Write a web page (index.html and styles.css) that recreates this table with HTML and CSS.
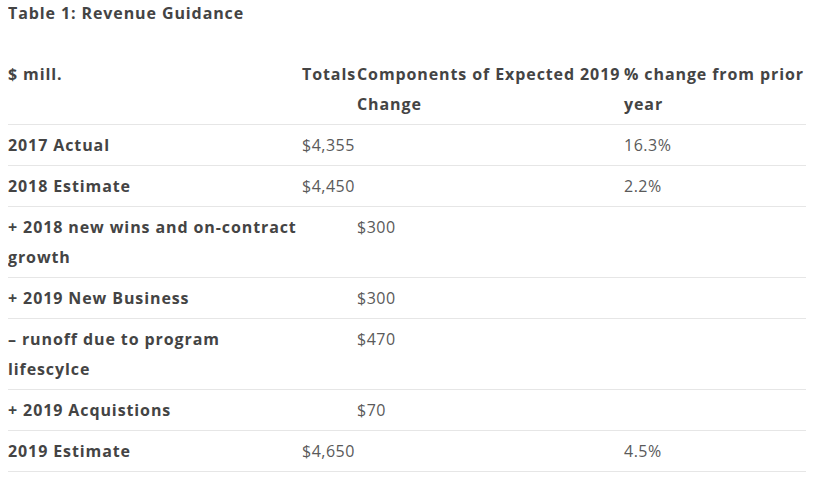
FILE: index.html
```html
<!DOCTYPE html>
<html>
<head>
<meta charset="utf-8">
<link rel="stylesheet" href="styles.css">
</head>
<body>
<p class="title">Table 1: Revenue Guidance</p>
<table class="guidance">
  <colgroup>
    <col class="c1"><col class="c2"><col class="c3"><col class="c4">
  </colgroup>
  <thead>
    <tr><th>$ mill.</th><th>Totals</th><th>Components of Expected 2019 Change</th><th>% change from prior year</th></tr>
  </thead>
  <tbody>
    <tr><th>2017 Actual</th><td>$4,355</td><td></td><td>16.3%</td></tr>
    <tr><th>2018 Estimate</th><td>$4,450</td><td></td><td>2.2%</td></tr>
    <tr><th>+ 2018 new wins and on-contract growth</th><td></td><td>$300</td><td></td></tr>
    <tr><th>+ 2019 New Business</th><td></td><td>$300</td><td></td></tr>
    <tr><th>– runoff due to program lifescylce</th><td></td><td>$470</td><td></td></tr>
    <tr><th>+ 2019 Acquistions</th><td></td><td>$70</td><td></td></tr>
    <tr><th>2019 Estimate</th><td>$4,650</td><td></td><td>4.5%</td></tr>
  </tbody>
</table>
</body>
</html>
```
FILE: styles.css
```css
html, body {
  background: #fff;
}
body {
  margin: 0 8px;
  font-family: "Open Sans", "Liberation Sans", sans-serif;
  font-size: 16px;
  color: #444;
}
.title {
  margin: 0 0 28px;
  line-height: 26px;
  font-weight: 700;
  letter-spacing: 0.9px;
  color: #444;
}
.guidance {
  width: 798px;
  border-collapse: collapse;
  table-layout: fixed;
}
.c1 { width: 294px; }
.c2 { width: 55px; }
.c3 { width: 267px; }
.c4 { width: 182px; }
.guidance th,
.guidance td {
  padding: 5px 0;
  line-height: 30px;
  text-align: left;
  vertical-align: top;
  border-bottom: 1px solid #e6e6e6;
}
.guidance th {
  font-weight: 700;
  letter-spacing: 0.9px;
  color: #444;
}
.guidance td {
  font-weight: 400;
  letter-spacing: 0.5px;
  color: #5a5a5a;
}
```
